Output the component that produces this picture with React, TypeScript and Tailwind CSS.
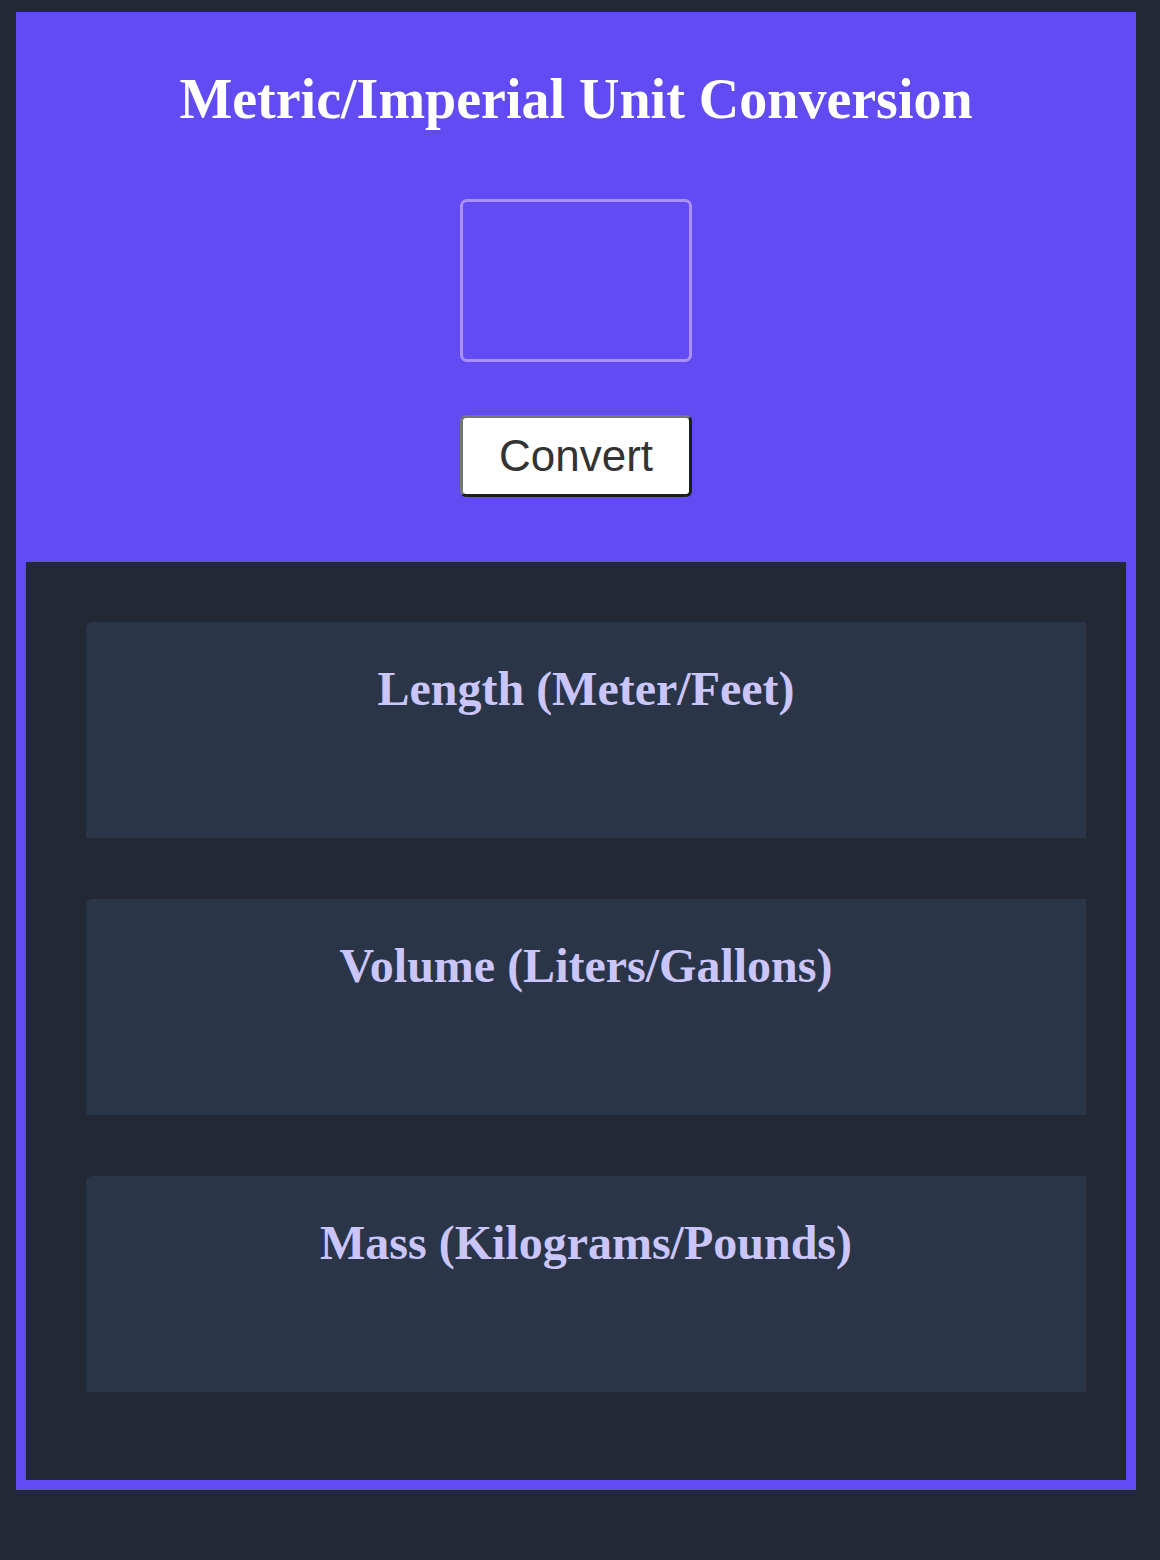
import React from "react";

const serif = { fontFamily: '"Liberation Serif", "Times New Roman", serif' };

function Card({ title }: { title: string }) {
  return (
    <div className="h-[216px] w-[1000px] rounded-tl-[6px] bg-[#2a3548] pt-[39px]">
      <h2
        className="text-center text-[48px] font-bold leading-[56px] text-[#cac5fa]"
        style={serif}
      >
        {title}
      </h2>
    </div>
  );
}

export default function App() {
  return (
    <div className="min-h-[1560px] w-full bg-[#222834] pt-[12px] pb-[70px]">
      <div className="ml-[16px] w-[1120px] bg-[#634bf4] px-[10px] pb-[10px]">
        <div className="flex flex-col items-center pt-[55px] pb-[65px]">
          <h1
            className="text-center text-[56px] font-bold leading-[64px] text-white"
            style={serif}
          >
            Metric/Imperial Unit Conversion
          </h1>
          <input
            type="text"
            aria-label="value"
            className="mt-[68px] h-[163px] w-[232px] rounded-[7px] border-[3px] border-[#a892f9] bg-transparent text-white outline-none"
          />
          <button
            className="mt-[53px] h-[82px] w-[232px] rounded-[6px] border-[3px] border-t-[#767676] border-l-[#767676] border-r-[#1e1e1e] border-b-[#1e1e1e] bg-white text-[44px] text-[#333333]"
            style={{ fontFamily: '"Liberation Sans", Arial, sans-serif' }}
          >
            Convert
          </button>
        </div>
        <div className="flex flex-col items-start gap-[61px] bg-[#222834] pl-[60px] pr-[40px] pt-[60px] pb-[88px]">
          <Card title="Length (Meter/Feet)" />
          <Card title="Volume (Liters/Gallons)" />
          <Card title="Mass (Kilograms/Pounds)" />
        </div>
      </div>
    </div>
  );
}
